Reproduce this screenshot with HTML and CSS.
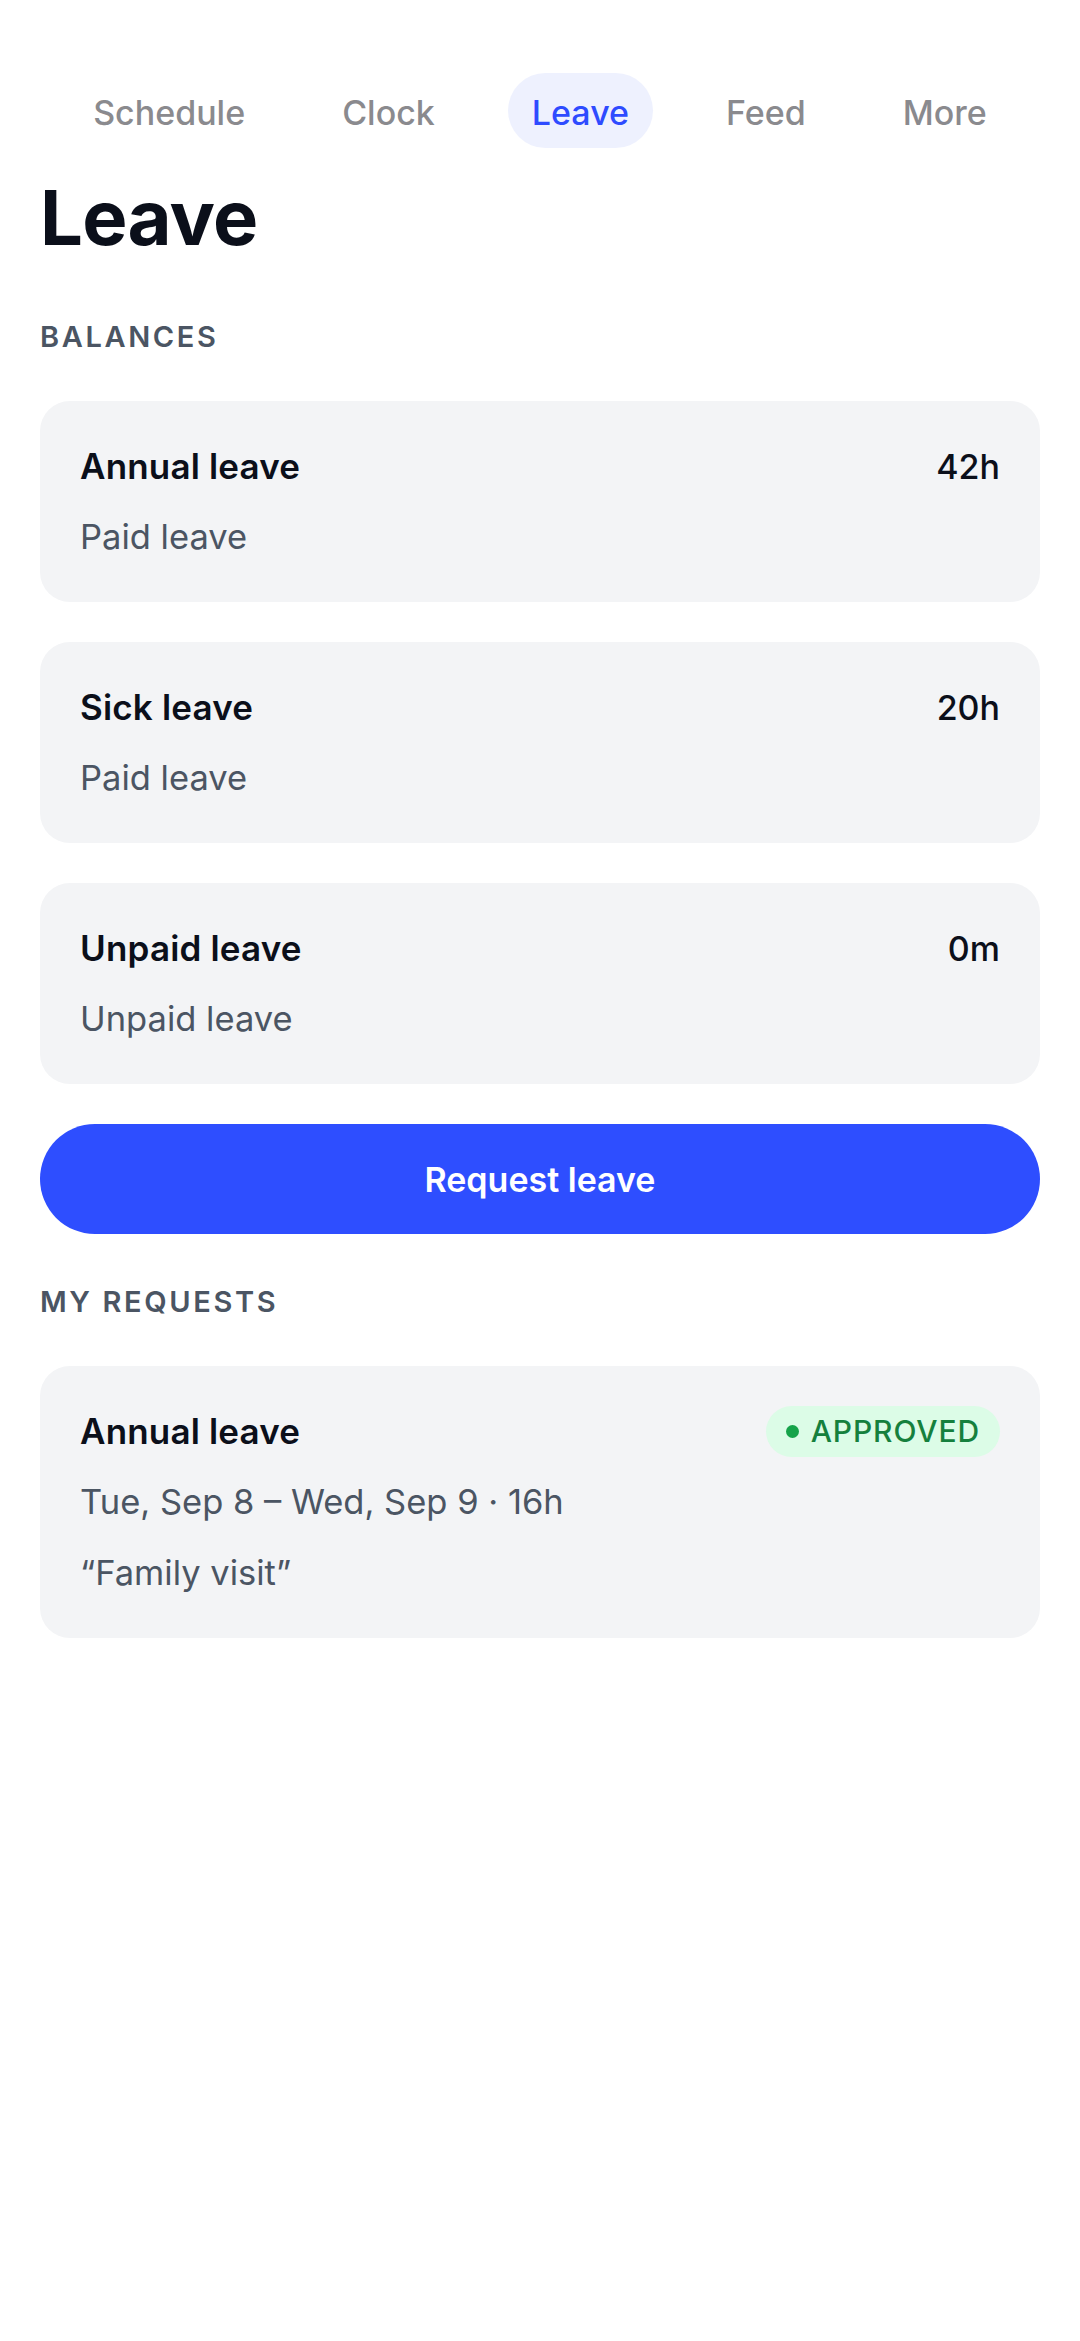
FILE: index.html
```html
<!DOCTYPE html>
<html lang="en">
<head>
    <meta charset="UTF-8">
    <meta name="viewport" content="width=device-width, initial-scale=1.0">
    <title>Leave</title>
    <link rel="stylesheet" href="styles.css">
</head>
<body>
    <nav class="tabs">
        <span class="tab">Schedule</span>
        <span class="tab">Clock</span>
        <span class="tab active">Leave</span>
        <span class="tab">Feed</span>
        <span class="tab">More</span>
    </nav>
    <main class="page">
        <h1>Leave</h1>

        <h3 class="label">Balances</h3>
        <div class="card">
            <div class="row">
                <span class="title">Annual leave</span>
                <span class="amount">42h</span>
            </div>
            <div class="sub">Paid leave</div>
        </div>
        <div class="card">
            <div class="row">
                <span class="title">Sick leave</span>
                <span class="amount">20h</span>
            </div>
            <div class="sub">Paid leave</div>
        </div>
        <div class="card">
            <div class="row">
                <span class="title">Unpaid leave</span>
                <span class="amount">0m</span>
            </div>
            <div class="sub">Unpaid leave</div>
        </div>

        <button class="primary">Request leave</button>

        <h3 class="label">My requests</h3>
        <div class="card">
            <div class="row">
                <span class="title">Annual leave</span>
                <span class="badge"><i class="dot"></i>APPROVED</span>
            </div>
            <div class="sub">Tue, Sep 8 – Wed, Sep 9 · 16h</div>
            <div class="sub">“Family visit”</div>
        </div>
    </main>
</body>
</html>
```

FILE: styles.css
```css
body {
    margin: 0;
    font-family: Inter, "Noto Sans", sans-serif;
    background: #fff;
    color: #0b0f1a;
}
.tabs {
    display: flex;
    justify-content: center;
    gap: 49px;
    padding-top: 73px;
}
.tab {
    padding: 0 24px;
    height: 75px;
    line-height: 79px;
    border-radius: 38px;
    font-size: 34px;
    font-weight: 500;
    color: #8a8a8e;
}
.tab.active {
    background: #eef1fe;
    color: #2e4bff;
}
.page {
    padding: 0 40px;
}
h1 {
    margin: 22px 0 0;
    padding-bottom: 5px;
    font-size: 76px;
    line-height: 94px;
    font-weight: 700;
    letter-spacing: -0.01em;
}
.label {
    margin: 50px 0 46px;
    font-size: 29px;
    line-height: 36px;
    font-weight: 600;
    letter-spacing: 0.09em;
    text-transform: uppercase;
    color: #4b5563;
}
.card {
    display: flex;
    flex-direction: column;
    gap: 23px;
    padding: 41px 40px;
    margin-bottom: 40px;
    background: #f3f4f6;
    border-radius: 30px;
}
.row {
    display: flex;
    justify-content: space-between;
    align-items: center;
    height: 48px;
}
.title {
    font-size: 35px;
    font-weight: 600;
    letter-spacing: 0.005em;
}
.amount {
    font-size: 34px;
    font-weight: 500;
}
.sub {
    font-size: 34.5px;
    line-height: 48px;
    color: #4b5563;
}
.primary {
    display: block;
    width: 100%;
    height: 110px;
    border: none;
    border-radius: 55px;
    background: #2e4eff;
    color: #fff;
    font-family: inherit;
    font-size: 34px;
    font-weight: 600;
}
.badge {
    display: flex;
    align-items: center;
    gap: 12px;
    height: 51px;
    padding: 0 20px;
    border-radius: 26px;
    background: #dcfce7;
    color: #15803d;
    font-size: 30px;
    font-weight: 500;
    letter-spacing: 0.03em;
}
.dot {
    width: 13px;
    height: 13px;
    border-radius: 50%;
    background: #16a34a;
}
```
